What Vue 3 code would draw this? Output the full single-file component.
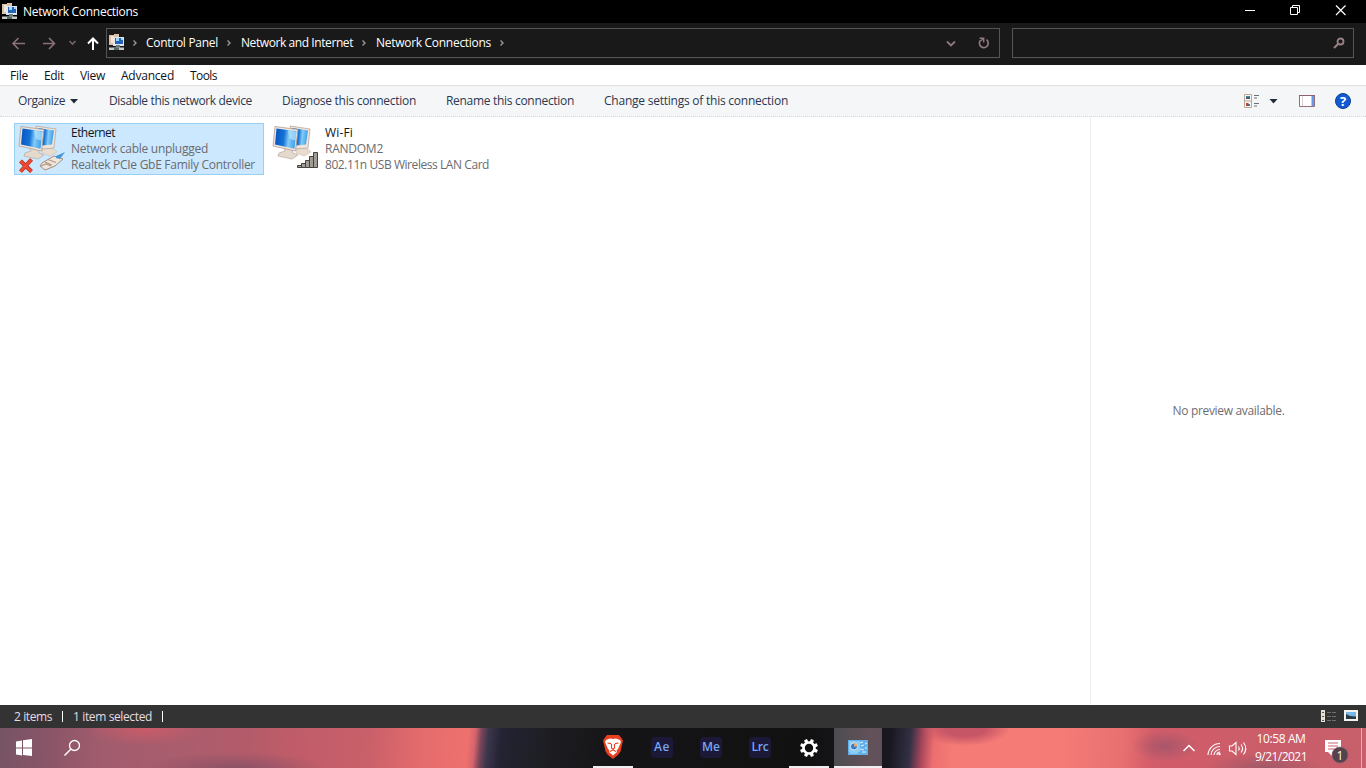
<script setup>
const crumbs = [
  { label: 'Control Panel', w: 72 },
  { label: 'Network and Internet', w: 112 },
  { label: 'Network Connections', w: 115 },
]
const menus = [
  { label: 'File', w: 18 },
  { label: 'Edit', w: 20 },
  { label: 'View', w: 25 },
  { label: 'Advanced', w: 53 },
  { label: 'Tools', w: 27 },
]
const commands = [
  { label: 'Disable this network device', w: 143 },
  { label: 'Diagnose this connection', w: 134 },
  { label: 'Rename this connection', w: 128 },
  { label: 'Change settings of this connection', w: 184 },
]
const connections = [
  { name: 'Ethernet', nw: 44, status: 'Network cable unplugged', sw: 137, device: 'Realtek PCIe GbE Family Controller', dw: 184, unplugged: true },
  { name: 'Wi-Fi', nw: 28, status: 'RANDOM2', sw: 58, device: '802.11n USB Wireless LAN Card', dw: 164, unplugged: false },
]
const adobe = [
  { label: 'Ae', w: 16 },
  { label: 'Me', w: 18 },
  { label: 'Lrc', w: 17 },
]

// Tracks a label so that it fills the given width in pixels.
const vFit = {
  mounted(el, { value }) {
    el.style.letterSpacing = '0px'
    const natural = el.getBoundingClientRect().width
    el.style.letterSpacing = (value - natural) / el.textContent.length + 'px'
  },
}
</script>

<template>
  <div class="screen">
    <header class="title">
      <svg class="app" width="16" height="16" viewBox="0 0 16 16">
        <path d="M0 1h5v10H0zM5 0h5v4H5z" fill="#dcc1ab" /><path d="M2 2h3v7H2z" fill="#f6e4d0" />
        <path d="M4 3h11v9H4z" fill="#dfe8f0" /><path d="M6 4h8v6H6z" fill="#2463b5" /><path d="M7 4h3v3H7zM12 4h2v2h-2z" fill="#9fd4f5" />
        <path d="M7 11h4v3H7z" fill="#697d80" /><path d="M0 13.500h15V16H0z" fill="#c9c6c4" /><path d="M5 13.500h5V16H5z" fill="#55696c" />
      </svg>
      <span v-fit="115" class="t">Network Connections</span>
      <svg class="winctl" width="104" height="16" viewBox="0 0 104 16" fill="none" stroke="#fff">
        <path d="M1 10.500h10M46.500 7.500h7v7h-7zM48.500 7.500v-2h7v7h-2" /><path d="M92 5.500l9.500 9.500M101.500 5.500L92 15" stroke-width="1.200" />
      </svg>
    </header>

    <nav class="address">
      <svg class="arrows" width="106" height="42" viewBox="0 0 106 42" fill="none" stroke-width="1.600">
        <path d="M25 20.500H13M18.500 15L13 20.500l5.500 5.500M43 20.500h12M49 15l5.500 5.500-5.500 5.500" stroke="#8b7176" />
        <path d="M69.500 18l3 3 3-3" stroke="#74666a" />
        <path d="M93 27V16M88 20.500l5-5 5 5" stroke="#fff" stroke-width="2" />
      </svg>
      <div class="path">
        <svg class="app" width="16" height="16" viewBox="0 0 16 16">
          <path d="M0 1h5v10H0zM5 0h5v4H5z" fill="#dcc1ab" /><path d="M2 2h3v7H2z" fill="#f6e4d0" />
          <path d="M4 3h11v9H4z" fill="#dfe8f0" /><path d="M6 4h8v6H6z" fill="#2463b5" /><path d="M7 4h3v3H7zM12 4h2v2h-2z" fill="#9fd4f5" />
          <path d="M7 11h4v3H7z" fill="#697d80" /><path d="M0 13.500h15V16H0z" fill="#c9c6c4" /><path d="M5 13.500h5V16H5z" fill="#55696c" />
        </svg>
        <svg class="chev first" width="6" height="8" viewBox="0 0 6 8"><path d="M1.500 1.500L4 4 1.500 6.500" /></svg>
        <template v-for="c in crumbs" :key="c.label">
          <span v-fit="c.w" class="t">{{ c.label }}</span>
          <svg class="chev" width="6" height="8" viewBox="0 0 6 8"><path d="M1.500 1.500L4 4 1.500 6.500" /></svg>
        </template>
        <svg class="pathtools" width="50" height="16" viewBox="0 0 50 16" fill="none" stroke="#8d787d" stroke-width="1.800">
          <path d="M4 6.500l4 4 4-4" />
          <path d="M43.500 4.700a4.400 4.400 0 1 1-6 .6" stroke-width="1.700" /><path d="M36.500 3.200h4.200v4.200M40.500 3.500L37.500 6" stroke-width="1.400" />
        </svg>
      </div>
      <div class="search">
        <svg width="14" height="14" viewBox="0 0 14 14" fill="none" stroke="#9a8085"><circle cx="8.500" cy="5.500" r="3" stroke-width="1.800" /><path d="M6.300 7.700L2 12" stroke-width="2" /></svg>
      </div>
    </nav>

    <div class="menu"><span v-for="m in menus" :key="m.label" v-fit="m.w" class="t">{{ m.label }}</span></div>

    <div class="commands">
      <span v-fit="47" class="t organize">Organize</span>
      <svg class="drop" width="8" height="5" viewBox="0 0 8 5"><path d="M0 0h8L4 4.500z" fill="#202a38" /></svg>
      <span v-for="c in commands" :key="c.label" v-fit="c.w" class="t cmd">{{ c.label }}</span>
      <svg class="cmdicons" width="110" height="18" viewBox="0 0 110 18">
        <g fill="none"><path d="M2.500 2.500h7v13h-7zM2.500 9h7" stroke="#bba794" /><path d="M4 4h4v3H4z" fill="#3d86a9" /><path d="M4 5.500h4v1.500H4z" fill="#46535e" /><path d="M4 11h2.500v3H4z" fill="#b8443c" /><path d="M6 12h2v2H6z" fill="#566d82" /><path d="M12 3.500h5M12 6h3M12 11.500h5M12 14h3" stroke="#6b6f75" /></g>
        <path d="M27.500 7h8l-4 4.500z" fill="#202a38" />
        <path d="M57.500 3.500h15v11h-15z" fill="#fff" stroke="#976f79" /><path d="M60.500 4v10" stroke="#dccfd2" /><path d="M69.500 4h2.500v10h-2.500z" fill="#5d9cec" /><path d="M57 3.500h16" stroke="#8b626c" />
        <circle cx="101" cy="9" r="7.500" fill="#125ad4" stroke="#123f8e" />
        <text x="101" y="14" text-anchor="middle" class="help">?</text>
      </svg>
    </div>

    <main>
      <section class="items">
        <article v-for="(n, i) in connections" :key="n.name" class="item" :class="{ selected: i === 0 }">
          <svg class="netico" width="50" height="50" viewBox="0 0 50 50">
            <defs>
              <linearGradient :id="'scr' + i" x1="0" y1="0.300" x2="1" y2="0.400"><stop offset="0" stop-color="#0754c3" /><stop offset=".42" stop-color="#1673d5" /><stop offset=".65" stop-color="#83cbf6" /><stop offset="1" stop-color="#3b9ce8" /></linearGradient>
            </defs>
            <path d="M25 24l11 1 3 3-7 4-8-3z" fill="#e8dccf" stroke="#cbbcae" stroke-width=".6" />
            <path d="M18 2l20 3-2 19-12 1z" fill="#eee4d9" stroke="#b9aaa0" stroke-width=".8" /><path d="M20 4l16 2.500-2 14-10 1z" :fill="`url(#scr${i})`" />
            <path d="M12 24l8 1 1 4 5 2-6 4-14-3 1-3 6-2z" fill="#e4d9cd" stroke="#bba99b" stroke-width=".7" />
            <path d="M3 2.500l23 3-2.500 21.500L1 22z" fill="#eee6dd" stroke="#b1a094" stroke-width=".8" /><path d="M4.500 4.500l20 2.700-2 17.500L3 20.500z" :fill="`url(#scr${i})`" /><path d="M16 6.500l8.500 1.200-1 9-6-2z" fill="#b9e5ff" opacity=".65" />
            <g v-if="n.unplugged">
              <path d="M24 39l12-7 9 3-8 7-10 4-5-4z" fill="#efe5da" stroke="#a28f83" /><path d="M27 38l7 3M30 35.500l8 3M23 42l5-2 5 2" fill="none" stroke="#b39888" stroke-width="1.200" /><path d="M38 32l9-4-5 7-4-1z" fill="#4a96d3" />
              <path d="M2.500 37l11 10.500M13.500 35.500l-11 12" stroke="#a72619" stroke-width="4" /><path d="M2.500 37l11 10.500M13.500 35.500l-11 12" stroke="#ef4932" stroke-width="2.600" />
            </g>
            <g v-else fill="#a09b95" stroke="#45413f" stroke-width="1">
              <path d="M25.500 41.500h4v2h-4zM29.500 39.500h4v4h-4zM33.500 36.500h4v7h-4zM37.500 32.500h4v11h-4zM41.500 28.500h4v15h-4z" />
            </g>
          </svg>
          <div class="info">
            <div class="name"><span v-fit="n.nw" class="t">{{ n.name }}</span></div>
            <div><span v-fit="n.sw" class="t">{{ n.status }}</span></div>
            <div><span v-fit="n.dw" class="t">{{ n.device }}</span></div>
          </div>
        </article>
      </section>
      <aside><span v-fit="112" class="t">No preview available.</span></aside>
    </main>

    <div class="status">
      <span v-fit="38" class="t">2 items</span><i></i><span v-fit="79" class="t">1 item selected</span><i></i>
      <svg width="40" height="14" viewBox="0 0 40 14">
        <path d="M2 1h4v12H2z" fill="#e7e2d5" /><path d="M3 3h2v1H3zM3 7h2v1H3zM3 11h2v1H3z" fill="#555" /><path d="M8 3.500h4M13 3.500h4M8 7.500h4M13 7.500h4M8 11.500h4M13 11.500h4" stroke="#746f6c" />
        <path d="M25 1h14v11H25z" fill="#f6f3ee" /><path d="M27 3h10v7H27z" fill="#78b8e8" /><path d="M27 5l4 2 6 .5V10H27z" fill="#293945" />
      </svg>
    </div>

    <footer>
      <svg class="start" width="90" height="40" viewBox="0 0 90 40">
        <path d="M16 13.500l6-1v7h-6zM23 12.300l9-1.300v8.500h-9zM16 20.500h6v7l-6-1zM23 20.500h9V28l-9-1z" fill="#fff" />
        <circle cx="74.500" cy="17.500" r="5" fill="none" stroke="#fff" stroke-width="1.300" /><path d="M71 21l-6.500 6.500" stroke="#fff" stroke-width="1.500" />
      </svg>
      <div class="task brave running">
        <svg width="22" height="26" viewBox="0 0 22 26"><path d="M5 1h12l2 2.500 2 3-1 4-1.500 7L16 21l-5 4-5-4-2.500-3.500L2 10.500l-1-4 2-3z" fill="#e83f20" /><path d="M4 6l4-1.500L11 5l3-.5L18 6l1 2-3 7-1.500 1.500L15 18l-4 3.500L7 18l.5-1.500L6 15 3 8z" fill="#fff" /><path d="M5.500 9l3.500.6M16.500 9l-3.500.6M9.500 10v4l1.500 1.200L12.500 14v-4M8 17.500l3-1.500 3 1.500" fill="none" stroke="#e83f20" stroke-width="1.100" /></svg>
      </div>
      <div v-for="a in adobe" :key="a.label" class="task"><b class="tile"><span v-fit="a.w">{{ a.label }}</span></b></div>
      <div class="task running gear">
        <svg width="20" height="20" viewBox="-10 -10 20 20"><g fill="#fff"><path v-for="k in 8" :key="k" d="M-1.900-5.500l.4-3.500h3l.4 3.500z" :transform="`rotate(${k * 45 + 22.5})`" /></g><circle r="5.500" fill="#111" stroke="#fff" stroke-width="2.600" /></svg>
      </div>
      <div class="task active">
        <svg width="20" height="15" viewBox="0 0 20 15"><path d="M0 0h20v15H0z" fill="#60b0eb" /><path d="M1 1h11v11H1z" fill="#8dcdf5" /><circle cx="6" cy="6.500" r="3.600" fill="#347fc7" stroke="#d9ebf5" /><path d="M6 6.500V3a3.500 3.500 0 0 1 3.500 3.500z" fill="#e5aa78" /><path d="M12 3l3-1M13 6l3-1M12 9l4 1M17 4l2-1M17 8h2M14 12h4" stroke="#e0f5ff" /><path d="M2 13h8" stroke="#b9e3fb" /></svg>
      </div>
      <svg class="tray" width="68" height="22" viewBox="0 0 68 22" fill="none" stroke="#fff" stroke-width="1.300">
        <path d="M2.500 13l5.500-5.500 5.500 5.500" stroke-width="1.500" />
        <g stroke-width="1.100"><path d="M27 17A12 12 0 0 1 39 5.500M30 17a9 9 0 0 1 9-8.500M33 17a6 6 0 0 1 6-5.500M36 17a3 3 0 0 1 3-3" /></g><circle cx="38.500" cy="16" r="1.200" fill="#fff" stroke="none" />
        <path d="M48.500 8h2.500l4-3.500v12l-4-3.500h-2.500zM57.500 8.500q1.500 2 0 4M60 6.500q3 4 0 8M62.500 4.500q4.500 6 0 12" stroke-width="1.100" />
      </svg>
      <div class="clock"><div><span v-fit="49">10:58 AM</span></div><div><span v-fit="52">9/21/2021</span></div></div>
      <svg class="note" width="26" height="26" viewBox="0 0 26 26">
        <path d="M1 2h16v12H8v4l-4-4H1z" fill="#fff" /><path d="M4 5h10M4 8h10M4 11h7" stroke="#c76370" />
        <circle cx="16" cy="17" r="8" fill="#54424d" stroke="#8b6671" stroke-width=".7" /><text x="16" y="21.500" text-anchor="middle">1</text>
      </svg>
      <i class="edge"></i>
    </footer>
  </div>
</template>

<style>
body { margin: 0; overflow: hidden; }
</style>

<style scoped>
.screen { width: 1366px; height: 768px; display: flex; flex-direction: column; background: #fff; font: 12px/16px "Open Sans", "Noto Sans", sans-serif; color: #111; overflow: hidden; }
.t, footer span { white-space: nowrap; flex: none; display: inline-block; }
svg { flex: none; display: block; }
.title { height: 23px; box-sizing: border-box; padding: 0 18px 0 2px; background: #000; color: #fff; display: flex; align-items: center; }
.title .app { margin: -1px 5px 0 0; }
.winctl { margin: -7px 0 0 auto; }
.address { height: 42px; background: #191919; display: flex; color: #fff; }
.path { width: 894px; height: 30px; box-sizing: border-box; border: 1px solid #555; margin-top: 5px; display: flex; align-items: center; padding-left: 2px; }
.path .app { margin-top: -2px; }
.path .t { margin-left: 9px; margin-right: -1px; }
.chev { margin-left: 9px; fill: none; stroke: #999; stroke-width: 1.4; }
.chev.first { margin-left: 7px; margin-right: -1px; }
.pathtools { margin: 0 6px 0 auto; }
.search { width: 342px; height: 30px; box-sizing: border-box; border: 1px solid #555; margin: 5px 0 0 12px; display: flex; align-items: center; justify-content: flex-end; padding-right: 7px; }
.menu { height: 20px; display: flex; align-items: center; gap: 16px; padding: 1px 0 0 10px; box-sizing: border-box; color: #10131c; }
.commands { height: 32px; box-sizing: border-box; background: #f5f6f8; border-top: 1px solid #dfe0e2; border-bottom: 1px dotted #d5d6d9; display: flex; align-items: center; padding-left: 18px; color: #2b3850; }
.drop { margin-left: 5px; }
.cmd { margin-left: 30px; }
.drop + .cmd { margin-left: 31px; }
.cmdicons { margin: 0 14px 0 auto; }
.help { font: bold 13px "Open Sans", sans-serif; fill: #fff; }
main { flex: 1; display: flex; min-height: 0; }
.items { width: 1076px; flex: none; display: flex; padding: 6px 0 0 14px; gap: 4px; border-right: 1px solid #eee; }
.item { width: 250px; height: 52px; display: flex; box-sizing: border-box; border: 1px solid transparent; padding-left: 3px; }
.item.selected { background: #cce8ff; border-color: #99cff2; }
.netico { margin-right: 3px; overflow: visible; }
.info { padding-top: 1px; color: #6a6b70; }
.info > div { height: 16px; display: flex; }
.info .name { color: #101523; }
aside { flex: 1; display: flex; align-items: center; justify-content: center; color: #6f6d72; }
.status { height: 23px; background: #333; color: #e5dce4; display: flex; align-items: center; padding: 0 7px 0 14px; }
.status i { width: 1px; height: 11px; background: #fff; margin: 0 10px; }
.status svg { margin: -1px 0 0 auto; }
footer { height: 40px; display: flex; color: #fff; background:
  radial-gradient(ellipse 60px 18px at 145px 0, #cb5b69 0, #cb5b6900 100%),
  radial-gradient(ellipse 90px 16px at 235px 40px, #8b5266 0, #8b526600 100%),
  radial-gradient(ellipse 45px 18px at 965px 0, #c65566 0 45%, #c6556600 100%),
  radial-gradient(ellipse 34px 16px at 1165px 18px, #a8566a 0, #a8566a00 100%),
  radial-gradient(ellipse 60px 15px at 1265px 40px, #a05868 0, #a0586800 100%),
  linear-gradient(95deg, #765465 0, #895567 50px, #a05c6d 100px, #ab5d6d 190px, #b45b6a 250px, #bf5c69 290px, #c9606a 370px, #e46b6c 420px, #ee716e 467px, #d5646c 474px, #7b465a 480px, #3d374d 487px, #232333 500px, #1d1d21 550px, #151518 610px, #111 800px, #191820 888px, #323044 908px, #a8465b 920px, #ec6e6f 932px, #f47b76 950px, #f47b76 1060px, #e87070 1120px, #d25c69 1150px, #cb5d69 1260px, #c7606c 1366px); }
.start { width: 90px; }
.task { width: 49px; height: 40px; display: flex; align-items: center; justify-content: center; box-sizing: border-box; }
.task.brave { margin: 0 4.5px 0 503px; width: 40px; }
.running { border-bottom: 2px solid #eee; }
.task.gear { width: 40px; margin-left: 4.5px; padding-top: 1px; }
.task.active { width: 48px; margin-left: 5px; background: linear-gradient(90deg, #4d4d51, #635158 75%, #60505a); border-bottom: 2px solid #eee; padding-top: 1px; }
.tile { width: 22px; height: 21px; border-radius: 4px; background: #1b1838; color: #78a7ee; display: flex; align-items: center; justify-content: center; font: 600 12px/20px "Open Sans", sans-serif; margin-top: -2px; }
.tray { margin: 10px 0 0 299px; }
.clock { width: 54px; margin: 2px 0 0 5px; display: flex; flex-direction: column; align-items: center; line-height: 18px; }
.note { margin: 10px 0 0 16px; }
.note text { font: 12px "Open Sans", sans-serif; fill: #fff; }
.edge { width: 1px; background: #e6aab1; margin: 0 4px 0 auto; }
</style>
